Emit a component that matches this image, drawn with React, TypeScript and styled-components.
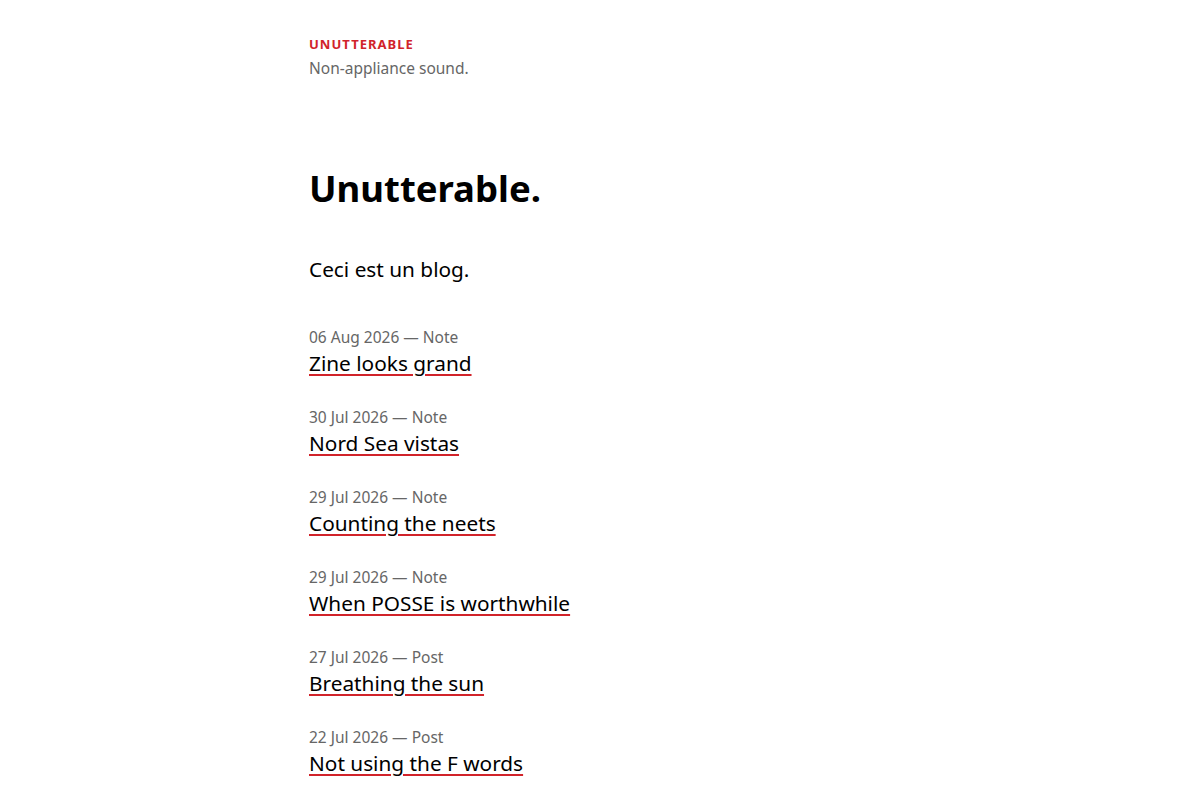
import React from "react";
import styled, { createGlobalStyle } from "styled-components";

const Global = createGlobalStyle`
  html, body { margin: 0; padding: 0; background: #fff; }
  body { font-family: "Noto Sans", "Open Sans", sans-serif; color: #000; }
`;

const Page = styled.div`
  max-width: 582px;
  margin: 0 auto;
  padding-top: 34px;
`;

const Masthead = styled.header`
  display: flex;
  flex-direction: column;
  gap: 2px;
`;

const SiteTitle = styled.a`
  font-size: 13px;
  line-height: 20px;
  font-weight: 700;
  letter-spacing: 0.08em;
  text-transform: uppercase;
  color: #d1232a;
  text-decoration: none;
`;

const Tagline = styled.div`
  font-size: 15.5px;
  line-height: 24px;
  color: #666;
`;

const Heading = styled.h1`
  margin: 84px 0 0;
  font-size: 36.5px;
  line-height: 48px;
  font-weight: 700;
`;

const Intro = styled.p`
  margin: 42px 0 0;
  font-size: 20.8px;
  line-height: 30px;
`;

const List = styled.ul`
  list-style: none;
  margin: 41px 0 0;
  padding: 0;
  display: flex;
  flex-direction: column;
  gap: 28px;
`;

const Entry = styled.li`
  display: flex;
  flex-direction: column;
`;

const Meta = styled.div`
  font-size: 15.5px;
  line-height: 24px;
  color: #666;
`;

const EntryLink = styled.a`
  font-size: 20.8px;
  line-height: 28px;
  color: #000;
  text-decoration: underline;
  text-decoration-color: #d1232a;
  text-decoration-thickness: 2px;
  text-underline-offset: 3px;
  align-self: flex-start;
`;

const entries = [
  { date: "06 Aug 2026", kind: "Note", title: "Zine looks grand" },
  { date: "30 Jul 2026", kind: "Note", title: "Nord Sea vistas" },
  { date: "29 Jul 2026", kind: "Note", title: "Counting the neets" },
  { date: "29 Jul 2026", kind: "Note", title: "When POSSE is worthwhile" },
  { date: "27 Jul 2026", kind: "Post", title: "Breathing the sun" },
  { date: "22 Jul 2026", kind: "Post", title: "Not using the F words" },
];

export default function App() {
  return (
    <>
      <Global />
      <Page>
        <Masthead>
          <SiteTitle href="#">Unutterable</SiteTitle>
          <Tagline>Non-appliance sound.</Tagline>
        </Masthead>
        <Heading>Unutterable.</Heading>
        <Intro>Ceci est un blog.</Intro>
        <List>
          {entries.map((e, i) => (
            <Entry key={i}>
              <Meta>
                {e.date} — {e.kind}
              </Meta>
              <EntryLink href="#">{e.title}</EntryLink>
            </Entry>
          ))}
        </List>
      </Page>
    </>
  );
}
